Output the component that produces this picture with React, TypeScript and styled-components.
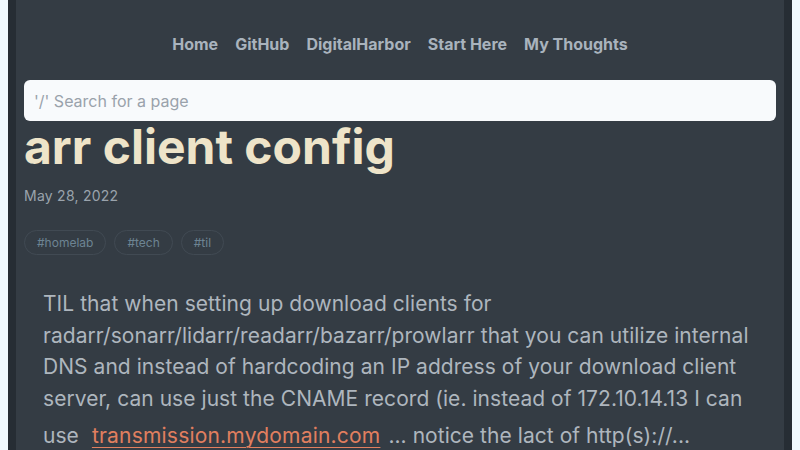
import styled, { createGlobalStyle } from 'styled-components'

const GlobalStyle = createGlobalStyle`
  html, body {
    margin: 0;
    padding: 0;
    background: #f0f9fe;
    font-family: Inter, 'Noto Sans', sans-serif;
  }
`

const Frame = styled.div`
  margin: 0 8px;
  min-height: 100vh;
  background: #343c44;
  border-left: 8px solid #262d34;
  border-right: 8px solid #262d34;
`

const Main = styled.main`
  padding: 0 8px 40px;
`

const Nav = styled.nav`
  display: flex;
  justify-content: center;
  gap: 17px;
  padding: 34px 0 26px;
`

const NavLink = styled.a`
  color: #a9b3bd;
  font-size: 16px;
  font-weight: 700;
  line-height: 20px;
  text-decoration: none;
`

const Search = styled.input`
  display: block;
  width: 100%;
  box-sizing: border-box;
  height: 41px;
  padding: 0 10px;
  border: none;
  border-radius: 6px;
  background: #f8fafc;
  font-family: inherit;
  font-size: 16px;
  color: #333;

  &::placeholder {
    color: #9aa2ab;
  }
`

const Title = styled.h1`
  margin: 0;
  color: #eee4c9;
  font-size: 48px;
  font-weight: 700;
  line-height: 52px;
`

const Date = styled.div`
  margin-top: 13px;
  color: #9aa3ac;
  font-size: 14px;
  letter-spacing: 0.25px;
  line-height: 20px;
`

const Tags = styled.div`
  display: flex;
  gap: 8px;
  margin-top: 24px;
`

const Tag = styled.a`
  display: inline-block;
  padding: 0 12px;
  height: 25px;
  line-height: 24px;
  box-sizing: border-box;
  border: 1px solid #414a53;
  border-radius: 999px;
  color: #6d8493;
  font-size: 12px;
  text-decoration: none;
`

const Body = styled.p`
  margin: 33px 0 0;
  padding: 0 20px 0 19px;
  color: #aeb6be;
  font-size: 21px;
  letter-spacing: 0.05px;
  line-height: 31.7px;
`

const Link = styled.a`
  display: inline-block;
  margin: 6px 8px 0 13px;
  line-height: 30px;
  color: #e17f5f;
  letter-spacing: 0.2px;
  text-decoration: underline;
  text-underline-offset: 4px;
  text-decoration-thickness: 1px;
`

export default function App() {
  return (
    <>
      <GlobalStyle />
      <Frame>
        <Main>
          <Nav>
            <NavLink href="#">Home</NavLink>
            <NavLink href="#">GitHub</NavLink>
            <NavLink href="#">DigitalHarbor</NavLink>
            <NavLink href="#">Start Here</NavLink>
            <NavLink href="#">My Thoughts</NavLink>
          </Nav>
          <Search placeholder="'/' Search for a page" />
          <Title>arr client config</Title>
          <Date>May 28, 2022</Date>
          <Tags>
            <Tag href="#">#homelab</Tag>
            <Tag href="#">#tech</Tag>
            <Tag href="#">#til</Tag>
          </Tags>
          <Body>
            TIL that when setting up download clients for
            radarr/sonarr/lidarr/readarr/bazarr/prowlarr that you can utilize
            internal DNS and instead of hardcoding an IP address of your
            download client server, can use just the CNAME record (ie. instead
            of 172.10.14.13 I can use
            <Link href="#">transmission.mydomain.com</Link>... notice the lact
            of http(s)://...
          </Body>
        </Main>
      </Frame>
    </>
  )
}
